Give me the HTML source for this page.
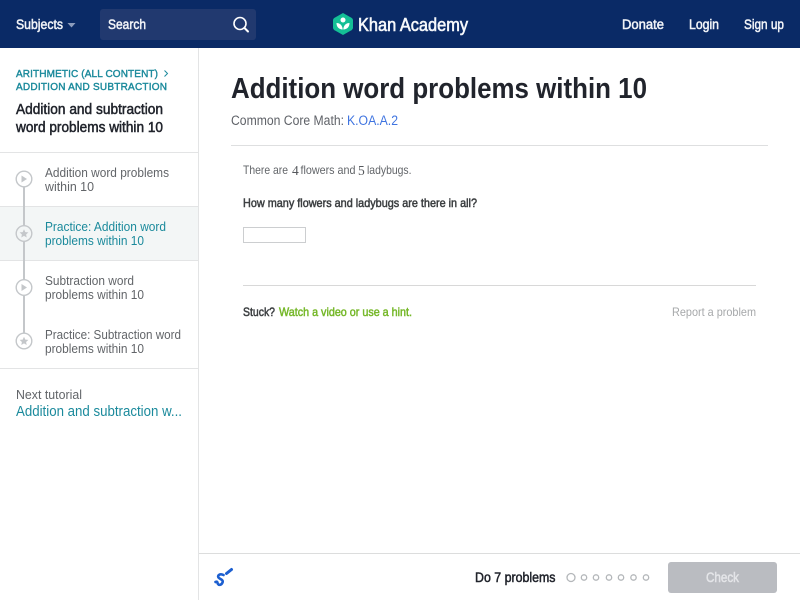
<!DOCTYPE html>
<html><head><meta charset="utf-8"><style>
html,body{margin:0;padding:0;background:#fff}
svg{display:block}
text{font-family:"Liberation Sans",sans-serif;white-space:pre}
.s{stroke-width:.5px}
.t{stroke-width:.4px}
</style></head><body>
<svg width="800" height="600" viewBox="0 0 800 600" xmlns="http://www.w3.org/2000/svg">
<defs>
<g id="star"><path d="M0-4.200 1.300-1.400 4.400-1.100 2.100 1 2.700 4 0 2.400-2.700 4-2.100 1-4.400-1.100-1.300-1.400Z" fill="#c4c7ca"/></g>
</defs>
<rect width="800" height="600" fill="#fff"/>
<rect width="800" height="48" fill="#0a2a66"/>
<g class="s" fill="#f2f4f8" stroke="#f2f4f8" font-size="13.500">
<text x="16" y="29" textLength="47" lengthAdjust="spacingAndGlyphs">Subjects</text>
<text x="622" y="29" textLength="42" lengthAdjust="spacingAndGlyphs">Donate</text>
<text x="689" y="29" textLength="30" lengthAdjust="spacingAndGlyphs">Login</text>
<text x="744" y="29" textLength="40" lengthAdjust="spacingAndGlyphs">Sign up</text>
</g>
<path d="M67.500 23h8l-4 4.500z" fill="#8c9cbc"/>
<rect x="100" y="9" width="156" height="31" rx="3" fill="#21396f"/>
<text class="s" x="108" y="29" font-size="13.500" fill="#f2f4f8" stroke="#f2f4f8" textLength="38" lengthAdjust="spacingAndGlyphs">Search</text>
<circle cx="240" cy="23.500" r="6" fill="none" stroke="#fff" stroke-width="1.600"/>
<path d="M244.500 28l3.500 3.500" stroke="#fff" stroke-width="2" stroke-linecap="round"/>
<path d="M343 13l8.600 4.900q1.400.8 1.400 2.300v7.600q0 1.500-1.400 2.300L343 35l-8.600-4.900q-1.400-.8-1.400-2.300v-7.600q0-1.500 1.400-2.300Z" fill="#14bf96"/>
<circle cx="343" cy="20" r="2.500" fill="#fff"/>
<path d="M336.500 23c3.400 0 6 2.300 6.200 6.500-3.600 0-6.200-2.400-6.200-6.500ZM349.500 23c-3.400 0-6 2.300-6.200 6.500 3.600 0 6.200-2.400 6.200-6.500Z" fill="#fff"/>
<text class="s" x="358" y="31" font-size="18.500" fill="#f6f8fb" stroke="#f6f8fb" style="stroke-width:.6px" textLength="110" lengthAdjust="spacingAndGlyphs">Khan Academy</text>

<rect x="198" y="48" width="1" height="552" fill="#e3e4e5"/>
<g class="t" font-size="10" fill="#1b8a9c" stroke="#1b8a9c">
<text x="16" y="77" textLength="142">ARITHMETIC (ALL CONTENT)</text>
<text x="16" y="90" textLength="151">ADDITION AND SUBTRACTION</text>
</g>
<path d="M164.500 70.500l3 3-3 3" fill="none" stroke="#1b8a9c" stroke-width="1"/>
<g class="s" font-size="14.500" fill="#21242c" stroke="#21242c">
<text x="16" y="114" textLength="147" lengthAdjust="spacingAndGlyphs">Addition and subtraction</text>
<text x="16" y="132" textLength="147" lengthAdjust="spacingAndGlyphs">word problems within 10</text>
</g>
<rect x="0" y="152" width="198" height="1" fill="#e3e4e5"/>
<rect x="0" y="207" width="198" height="53" fill="#f3f6f6"/>
<rect x="0" y="206" width="198" height="1" fill="#e3e4e5"/>
<rect x="0" y="260" width="198" height="1" fill="#e3e4e5"/>
<rect x="23" y="180" width="2" height="160" fill="#c4c7ca"/>
<g fill="#fff" stroke="#c4c7ca" stroke-width="1.400">
<circle cx="24" cy="179" r="7.800"/><circle cx="24" cy="233.500" r="7.800" fill="#f3f6f6"/><circle cx="24" cy="287.500" r="7.800"/><circle cx="24" cy="341" r="7.800"/>
</g>
<path d="M21.500 175.500l5.500 3.500-5.500 3.500zM21.500 284l5.500 3.500-5.500 3.500z" fill="#c4c7ca"/>
<use href="#star" x="24" y="233.500"/><use href="#star" x="24" y="341"/>
<g font-size="12.500" fill="#626569">
<text x="45" y="177" textLength="124" lengthAdjust="spacingAndGlyphs">Addition word problems</text>
<text x="45" y="191" textLength="49" lengthAdjust="spacingAndGlyphs">within 10</text>
<text x="45" y="285" textLength="89" lengthAdjust="spacingAndGlyphs">Subtraction word</text>
<text x="45" y="299" textLength="99" lengthAdjust="spacingAndGlyphs">problems within 10</text>
<text x="45" y="339" textLength="136" lengthAdjust="spacingAndGlyphs">Practice: Subtraction word</text>
<text x="45" y="353" textLength="99" lengthAdjust="spacingAndGlyphs">problems within 10</text>
</g>
<g font-size="12.500" fill="#1b8a9c">
<text x="45" y="231" textLength="121" lengthAdjust="spacingAndGlyphs">Practice: Addition word</text>
<text x="45" y="245" textLength="99" lengthAdjust="spacingAndGlyphs">problems within 10</text>
</g>
<rect x="0" y="368" width="198" height="1" fill="#e3e4e5"/>
<text x="16" y="399" font-size="12.500" fill="#626569" textLength="66" lengthAdjust="spacingAndGlyphs">Next tutorial</text>
<text x="16" y="416" font-size="14.500" fill="#1b8a9c" textLength="166" lengthAdjust="spacingAndGlyphs">Addition and subtraction w...</text>

<text x="231" y="98" font-size="28.500" font-weight="bold" fill="#21242c" textLength="416" lengthAdjust="spacingAndGlyphs">Addition word problems within 10</text>
<text x="231" y="125" font-size="13.500" fill="#5f6268" textLength="113" lengthAdjust="spacingAndGlyphs">Common Core Math:</text>
<text x="347" y="125" font-size="13.500" fill="#3f74e0" textLength="51" lengthAdjust="spacingAndGlyphs">K.OA.A.2</text>
<rect x="231" y="145" width="537" height="1" fill="#dedfe0"/>

<g font-size="12" fill="#626569">
<text x="243" y="174" textLength="45" lengthAdjust="spacingAndGlyphs">There are</text>
<text x="300.500" y="174" textLength="55" lengthAdjust="spacingAndGlyphs">flowers and</text>
<text x="367" y="174" textLength="44.500" lengthAdjust="spacingAndGlyphs">ladybugs.</text>
</g>
<g font-size="13.500" fill="#55585c">
<text x="292" y="175" style="font-family:'Liberation Serif',serif">4</text>
<text x="358" y="175" style="font-family:'Liberation Serif',serif">5</text>
</g>
<text class="s" x="243" y="207" font-size="12" fill="#3b3e40" stroke="#3b3e40" textLength="234" lengthAdjust="spacingAndGlyphs">How many flowers and ladybugs are there in all?</text>
<rect x="243.500" y="227.500" width="62" height="15" fill="#fff" stroke="#ccced0"/>
<rect x="243" y="285" width="513" height="1" fill="#d8d8d8"/>
<text class="s" x="243" y="316" font-size="12" fill="#3b3e40" stroke="#3b3e40" textLength="32" lengthAdjust="spacingAndGlyphs">Stuck?</text>
<text class="s" x="279" y="316" font-size="12" fill="#76b82a" stroke="#76b82a" textLength="133" lengthAdjust="spacingAndGlyphs">Watch a video or use a hint.</text>
<text x="672" y="316" font-size="12" fill="#a6a8aa" textLength="84" lengthAdjust="spacingAndGlyphs">Report a problem</text>

<rect x="199" y="553" width="601" height="1" fill="#dcdddd"/>
<path d="M223.500 575C219.500 573 216.500 576 219 578C221 579.500 223.500 580 222.500 582.500C221.500 585 219 585.500 218 584C217 582.500 218 581 215.500 582" fill="none" stroke="#1c5fd0" stroke-width="2.600" stroke-linecap="round" stroke-linejoin="round"/>
<path d="M226.500 573.500l5-4" stroke="#1c5fd0" stroke-width="3" stroke-linecap="round"/>
<text class="s" x="475" y="582" font-size="13.500" fill="#21242c" stroke="#21242c" textLength="80.500" lengthAdjust="spacingAndGlyphs">Do 7 problems</text>
<g fill="none" stroke="#b4b7ba" stroke-width="1.300">
<circle cx="571" cy="577.500" r="4"/><circle cx="584" cy="577.500" r="2.700"/><circle cx="596" cy="577.500" r="2.700"/><circle cx="609" cy="577.500" r="2.700"/><circle cx="621" cy="577.500" r="2.700"/><circle cx="633.500" cy="577.500" r="2.700"/><circle cx="646" cy="577.500" r="2.700"/>
</g>
<rect x="668" y="562" width="109" height="31" rx="3" fill="#babcc1"/>
<text class="s" x="706" y="582" font-size="13.500" fill="#e4e5e8" stroke="#e4e5e8" textLength="33" lengthAdjust="spacingAndGlyphs">Check</text>
</svg>
</body></html>
